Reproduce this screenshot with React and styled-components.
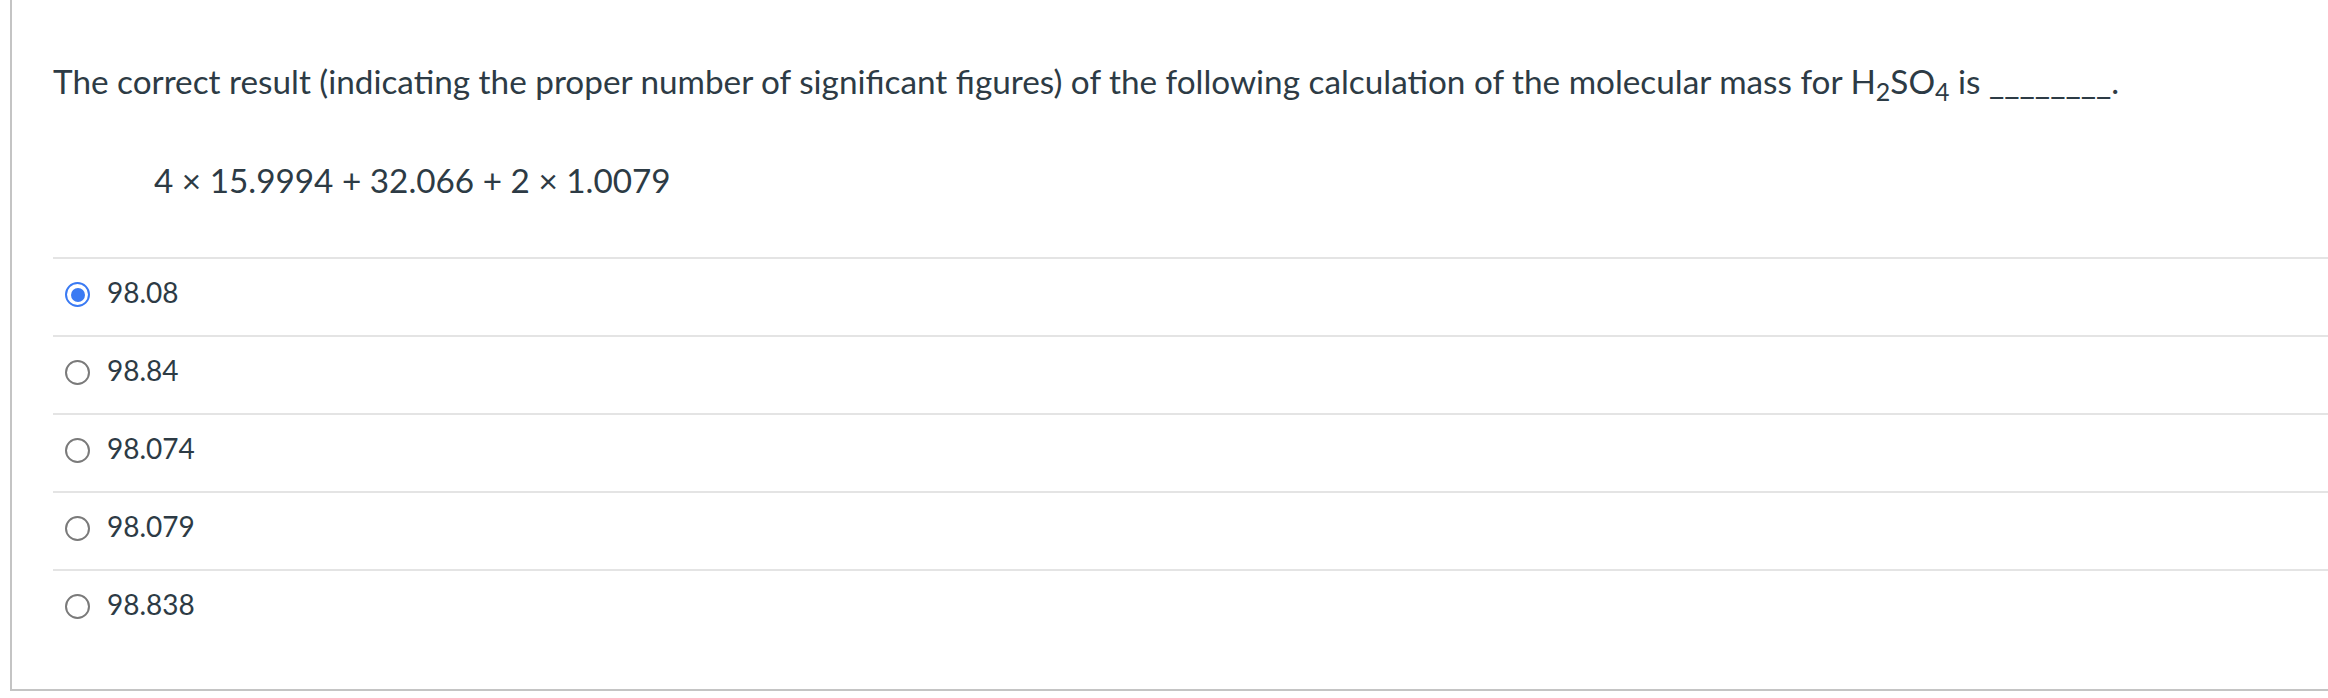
import React from "react";
import styled, { createGlobalStyle } from "styled-components";

const Global = createGlobalStyle`
  html, body { margin: 0; padding: 0; background: #ffffff; overflow: hidden; }
  body { font-family: Lato, "Noto Sans", "Liberation Sans", sans-serif; color: #2d3b45; }
`;

const Panel = styled.div`
  margin-left: 10px;
  border-left: 2px solid #c4c4c4;
  border-bottom: 2px solid #c4c4c4;
  padding: 57px 0 42px 41px;
  box-sizing: border-box;
`;

const QuestionText = styled.p`
  margin: 0;
  font-size: 33.3px;
  line-height: 48px;
  white-space: nowrap;
`;

const Formula = styled.p`
  margin: 51px 0 53px 0;
  padding-left: 101px;
  font-size: 33.3px;
  line-height: 48px;
`;

const Sub = styled.sub`
  font-size: 0.75em;
  line-height: 0;
  vertical-align: -0.28em;
`;

const AnswerList = styled.div`
  display: flex;
  flex-direction: column;
`;

const AnswerRow = styled.label`
  display: flex;
  align-items: flex-start;
  height: 78px;
  box-sizing: border-box;
  border-top: 2px solid #e4e4e4;
  padding: 16px 0 0 12px;
  gap: 17px;
  cursor: pointer;
`;

const Radio = styled.span`
  flex: none;
  width: 25px;
  height: 25px;
  margin-top: 7px;
  box-sizing: border-box;
  border-radius: 50%;
  border: ${(p) => (p.$checked ? "2.5px solid #3a7af3" : "2px solid #7a7a7a")};
  display: flex;
  align-items: center;
  justify-content: center;
  &::after {
    content: "";
    display: ${(p) => (p.$checked ? "block" : "none")};
    width: 14px;
    height: 14px;
    border-radius: 50%;
    background: #3a7af3;
  }
`;

const AnswerText = styled.span`
  font-size: 28px;
  line-height: 34px;
  color: #2d3b45;
`;

const answers = [
  { value: "98.08", checked: true },
  { value: "98.84" },
  { value: "98.074" },
  { value: "98.079" },
  { value: "98.838" },
];

export default function App() {
  return (
    <>
      <Global />
      <Panel>
        <QuestionText>
          The correct result (indicating the proper number of significant figures) of the following
          calculation of the molecular mass for H<Sub>2</Sub>SO<Sub>4</Sub> is ________.
        </QuestionText>
        <Formula>4 × 15.9994 + 32.066 + 2 × 1.0079</Formula>
        <AnswerList>
          {answers.map((a) => (
            <AnswerRow key={a.value}>
              <Radio $checked={!!a.checked} />
              <AnswerText>{a.value}</AnswerText>
            </AnswerRow>
          ))}
        </AnswerList>
      </Panel>
    </>
  );
}
